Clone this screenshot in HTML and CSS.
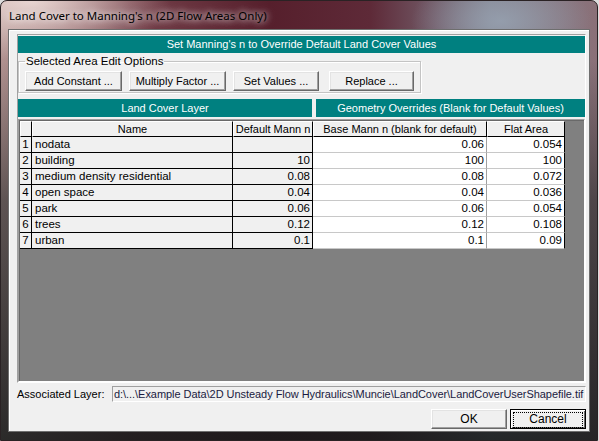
FILE: index.html
```html
<!DOCTYPE html>
<html lang="en">
<head>
  <meta charset="UTF-8" />
  <title>Land Cover to Manning's n (2D Flow Areas Only)</title>
  <link rel="stylesheet" href="styles.css">
</head>
<body>
  <div class="window">
    <div class="titlebar">Land Cover to Manning's n (2D Flow Areas Only)</div>

    <div class="client">
      <div class="panel">
        <div class="banner">Set Manning's n to Override Default Land Cover Values</div>

        <fieldset class="edit-options">
          <legend>Selected Area Edit Options</legend>
          <button class="btn w97">Add Constant ...</button>
          <button class="btn w97">Multiply Factor ...</button>
          <button class="btn w86">Set Values ...</button>
          <button class="btn w85 gap-wide">Replace ...</button>
        </fieldset>

        <div class="section-heads">
          <div class="banner head-left">Land Cover Layer</div>
          <div class="banner head-right">Geometry Overrides (Blank for Default Values)</div>
        </div>

        <div class="grid-frame">
          <div class="grid" id="grid">
            <div class="hcell"></div>
            <div class="hcell">Name</div>
            <div class="hcell">Default Mann n</div>
            <div class="hcell">Base Mann n (blank for default)</div>
            <div class="hcell">Flat Area</div>
          </div>
        </div>
      </div>

      <div class="layer-row">
        <span class="layer-label">Associated Layer:</span>
        <div class="layer-field">d:\...\Example Data\2D Unsteady Flow Hydraulics\Muncie\LandCover\LandCoverUserShapefile.tif</div>
      </div>

      <div class="dialog-buttons">
        <button class="btn dlg">OK</button>
        <button class="btn dlg default"><span class="focus">Cancel</span></button>
      </div>
    </div>
  </div>

  <script>
    const rows = [
      ["nodata", "", "0.06", "0.054"],
      ["building", "10", "100", "100"],
      ["medium density residential", "0.08", "0.08", "0.072"],
      ["open space", "0.04", "0.04", "0.036"],
      ["park", "0.06", "0.06", "0.054"],
      ["trees", "0.12", "0.12", "0.108"],
      ["urban", "0.1", "0.1", "0.09"]
    ];

    const grid = document.getElementById("grid");
    rows.forEach((r, i) => {
      const cells = [
        ["num", String(i + 1)],
        ["name", r[0]],
        ["def", r[1]],
        ["base", r[2]],
        ["flat", r[3]]
      ];
      cells.forEach(([cls, text]) => {
        const div = document.createElement("div");
        div.className = "cell " + cls;
        div.textContent = text;
        grid.appendChild(div);
      });
    });
  </script>
</body>
</html>
```

FILE: styles.css
```css
html, body {
  margin: 0;
  padding: 0;
}

body {
  width: 599px;
  height: 441px;
  overflow: hidden;
  background: #dcdcdc;
  font-family: "Liberation Sans", Arial, sans-serif;
  font-size: 11px;
  color: #000;
}

.window {
  box-sizing: border-box;
  width: 598px;
  height: 441px;
  display: flex;
  flex-direction: column;
  padding: 0 7px 8px 7px;
  border: 1px solid #2a2224;
  border-radius: 7px 7px 0 0;
  background:
    linear-gradient(to bottom, rgba(0,0,0,0) 0, rgba(0,0,0,0) 60px, rgba(28,34,34,0.55) 200px, rgba(20,24,24,0.85) 100%),
    radial-gradient(ellipse 140px 60px at 30px 0, rgba(240,222,218,0.9), rgba(240,222,218,0) 100%),
    radial-gradient(ellipse 90px 50px at 500px 20px, rgba(150,160,175,0.9), rgba(150,160,175,0) 100%),
    linear-gradient(to right, #b09290 0%, #74404a 22%, #561f2c 45%, #5e2a38 62%, #82828e 82%, #8a7078 100%);
}

.titlebar {
  height: 28px;
  display: flex;
  align-items: center;
  padding-left: 1px;
  font-family: "Noto Sans", "Open Sans", sans-serif;
  font-size: 11.5px;
  color: #000;
  text-shadow: 0 0 6px rgba(255,255,255,0.9), 0 0 10px rgba(255,255,255,0.7);
}

.client {
  flex: 1;
  background: #f0f0f0;
  border: 1px solid #6e6e6e;
  box-shadow: inset 1px 1px 0 #ffffff;
  padding: 4px 3px 0 8px;
  display: flex;
  flex-direction: column;
}

.panel {
  border: 1px solid;
  border-color: #a0a0a0 #ffffff #ffffff #a0a0a0;
  padding-top: 1px;
}

.banner {
  background: #008080;
  color: #fff;
  text-align: center;
  height: 17px;
  line-height: 17px;
  font-size: 11px;
}

.edit-options {
  width: 403px;
  box-sizing: border-box;
  margin: 2px 0 0 0;
  padding: 3px 0 1px 6px;
  border: 1px solid #c4c4c4;
  box-shadow: inset 1px 1px 0 #fff, 1px 1px 0 #fff;
  display: flex;
  gap: 7px;
}

.edit-options legend {
  padding: 0 1px;
  margin-left: 0;
  font-size: 11.5px;
  line-height: 13px;
}

.btn {
  box-sizing: border-box;
  height: 20px;
  padding: 0;
  font-family: "Liberation Sans", Arial, sans-serif;
  font-size: 11px;
  color: #000;
  background: #f0f0f0;
  border: 1px solid;
  border-color: #ffffff #696969 #696969 #ffffff;
  box-shadow: inset -1px -1px 0 #a0a0a0, inset 1px 1px 0 #e3e3e3;
}

.w97 { width: 97px; }
.w86 { width: 86px; }
.w85 { width: 85px; }
.gap-wide { margin-left: 3px; }

.section-heads {
  display: flex;
  gap: 4px;
  margin-top: 6px;
}

.section-heads .banner {
  height: 18px;
  line-height: 18px;
}

.head-left { width: 294px; }
.head-right { flex: 1; }

.grid-frame {
  margin-top: 2px;
  height: 263px;
  box-sizing: border-box;
  background: #808080;
  border: 1px solid;
  border-color: #a0a0a0 #ffffff #ffffff #a0a0a0;
  box-shadow: inset 1px 1px 0 #696969;
  padding: 1px 0 0 1px;
}

.grid {
  display: grid;
  grid-template-columns: 12px 201px 80px 174px 78px;
  grid-auto-rows: 16px;
  width: 545px;
}

.hcell {
  box-sizing: border-box;
  background: #f0f0f0;
  border-top: 1px solid #fff;
  border-left: 1px solid #fff;
  border-right: 1px solid #000;
  border-bottom: 1px solid #000;
  text-align: center;
  line-height: 14px;
  white-space: nowrap;
  overflow: hidden;
}

.cell {
  box-sizing: border-box;
  line-height: 15px;
  font-size: 11.5px;
  white-space: nowrap;
  overflow: hidden;
  border-right: 1px solid #000;
  border-bottom: 1px solid #000;
  background: #f0f0f0;
}

.cell.num {
  text-align: center;
}

.cell.name {
  padding-left: 3px;
}

.cell.def {
  text-align: right;
  padding-right: 2px;
}

.cell.base,
.cell.flat {
  background: #fff;
  text-align: right;
  padding-right: 2px;
  border-bottom-color: #c8c8c8;
}

.cell.base {
  border-right-color: #a0a0a0;
}

.layer-row {
  display: flex;
  align-items: center;
  margin-top: 3px;
}

.layer-label {
  width: 95px;
  font-size: 11px;
}

.layer-field {
  flex: 1;
  height: 16px;
  box-sizing: border-box;
  border: 1px solid;
  border-color: #a0a0a0 #ffffff #ffffff #a0a0a0;
  background: #f0f0f0;
  color: #1a1a40;
  font-size: 11px;
  letter-spacing: -0.05px;
  line-height: 14px;
  padding-left: 1px;
  white-space: nowrap;
  overflow: hidden;
}

.dialog-buttons {
  display: flex;
  justify-content: flex-end;
  gap: 3px;
  margin-top: 7px;
}

.btn.dlg {
  width: 76px;
  height: 20px;
  font-size: 12px;
}

.btn.default {
  border-color: #000;
  box-shadow: inset 1px 1px 0 #fff, inset -1px -1px 0 #696969;
  padding: 2px;
}

.focus {
  display: block;
  height: 14px;
  line-height: 12px;
  border: 1px dotted #000;
}
```
